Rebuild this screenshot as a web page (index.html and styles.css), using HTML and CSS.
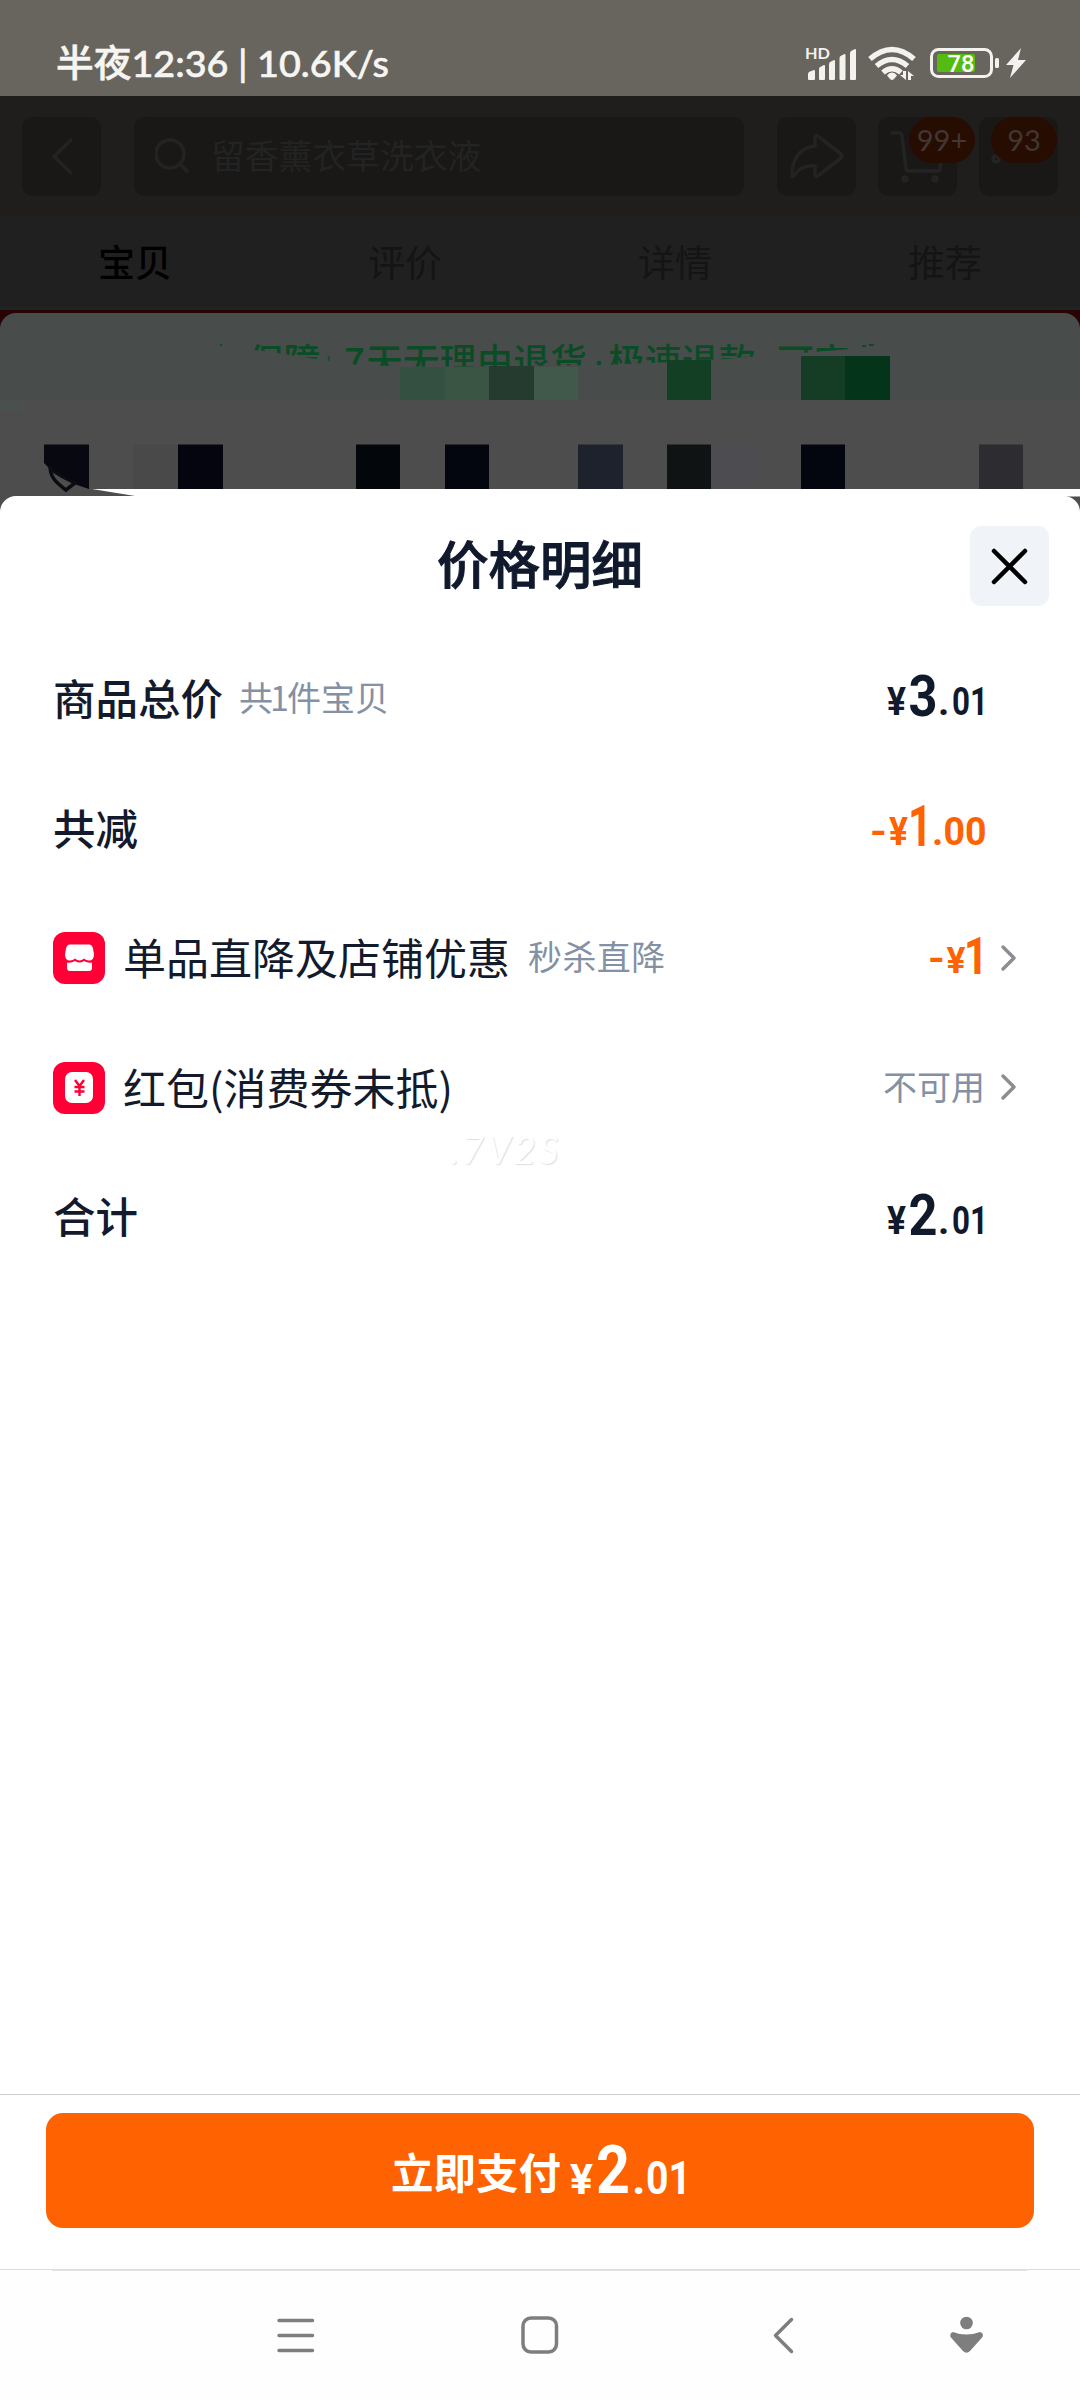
FILE: index.html
```html
<!DOCTYPE html>
<html lang="zh-CN">
<head>
<meta charset="utf-8">
<title>价格明细</title>
<link rel="stylesheet" href="styles.css">
</head>
<body>
<div class="screen">
  <div class="status">
    <svg class="status-clock" width="340" height="44" viewBox="0 0 340 44"><text x="0" y="35" textLength="333" lengthAdjust="spacingAndGlyphs">半夜12:36 | 10.6K/s</text></svg>
    <svg class="status-icons" width="230" height="40" viewBox="800 44 230 40">
      <text class="hd" x="805" y="59" textLength="25" lengthAdjust="spacingAndGlyphs">HD</text>
      <g fill="#f3f2ef">
        <path d="M808 79v-5q0-2 2-2.500l4-1.500q1 0 1 1v8q0 1-1 1h-5q-1 0-1-1z"/>
        <path d="M819 79v-10q0-2 2-2.500l3-1.500q1 0 1 1v13q0 1-1 1h-4q-1 0-1-1z"/>
        <path d="M829 79v-15q0-2 2-2.500l3-1.500q1 0 1 1v18q0 1-1 1h-4q-1 0-1-1z"/>
        <path d="M839.500 79v-21q0-2 2-2.500l3-1.500q1 0 1 1v24q0 1-1 1h-4q-1 0-1-1z"/>
        <path d="M850 79v-26q0-2 2-2.500l3-1.500q1 0 1 1v29q0 1-1 1h-4q-1 0-1-1z"/>
        <path d="M892 80q-1 0-2-1l-3-3.500q2-3 5-3t5 3l-3 3.500q-1 1-2 1z"/>
        <path d="M906 71v9l-6-5h3v-4zM908 80v-9l6 5h-3v4z"/>
        <rect x="995" y="58" width="4" height="10" rx="1.500"/>
        <path d="M1021 48l-15 17h7.500l-3.500 13 16-18h-8z"/>
      </g>
      <g fill="none" stroke="#f3f2ef" stroke-width="5.500">
        <path d="M870 59q22-19 44 0"/><path d="M876.500 66q15.500-13 31 0"/><path d="M883 72.500q9-7.500 18 0"/>
      </g>
      <rect x="931.500" y="49.500" width="60" height="27" rx="7" fill="none" stroke="#f3f2ef" stroke-width="3"/>
      <rect x="937" y="54" width="38" height="18" rx="2" fill="#56bb10"/>
      <text class="battery" x="947.500" y="72" textLength="27" lengthAdjust="spacingAndGlyphs">78</text>
    </svg>
  </div>

  <div class="header">
    <div class="tool back"><svg width="79" height="79" viewBox="0 0 79 79"><path d="M49 23L32 39.500 49 56"/></svg></div>
    <div class="search">
      <svg width="36" height="40" viewBox="0 0 36 40"><circle cx="15" cy="19" r="14"/><path d="M26 30l6 6"/></svg>
      <span>留香薰衣草洗衣液</span>
    </div>
    <div class="tool share"><svg width="79" height="79" viewBox="0 0 79 79"><path d="M15 59c0-18 9-29 23-30V21q1-4 4-1L64 37q2 2 0 4L42 58q-3 3-4-1V49c-10-1-16 2-21 10q-1 1-2 0z"/></svg></div>
    <div class="tool cart"><svg width="79" height="79" viewBox="0 0 79 79"><path d="M14 16h7q3 0 3 3l4 32q0 3 3 3h28q3 0 3-3l4-25"/><circle cx="27" cy="62" r="2"/><circle cx="57" cy="62" r="2"/></svg><b class="badge">99+</b></div>
    <div class="tool more"><svg width="79" height="79" viewBox="0 0 79 79"><circle cx="17" cy="42" r="3"/></svg><b class="badge">93</b></div>
  </div>
  <div class="tabs"><span class="active">宝贝</span><span>评价</span><span>详情</span><span>推荐</span></div>

  <div class="backdrop">
    <div class="service">
      <svg width="1080" height="87" viewBox="0 313 1080 87">
        <defs><clipPath id="cut"><path d="M200 340H880V346L850 349L815 352L760 356L700 361L600 365L480 366.500L400 366.500L345 364L310 358L270 352L215 345z"/></clipPath></defs>
        <g clip-path="url(#cut)" class="promise">
          <text x="247" y="375">保障</text>
          <text class="bar" x="326" y="371">|</text>
          <text x="344" y="375">7</text>
          <text x="366" y="375">天无理由退货</text>
          <text x="608" y="375">极速退款</text>
          <text x="777" y="375">可定</text>
        </g>
        <circle cx="221" cy="345" r="1.200" fill="#0a4c25"/>
        <path fill="#0a4c25" d="M862 345h4v2h-4zM869 344h5v2h-5z"/>
        <circle cx="599" cy="363" r="2.200" fill="#0a4c25"/>
        <path fill="#345040" d="M400 367h45v33h-45z"/><path fill="#3b5545" d="M445 367h44v33h-44z"/>
        <path fill="#263b2f" d="M489 366h45v34h-45z"/><path fill="#40594a" d="M534 367h44v33h-44z"/>
        <path fill="#133f25" d="M667 360h44v40h-44z"/><path fill="#153d25" d="M801 356h44v44h-44z"/><path fill="#04351a" d="M845 356h45v44h-45z"/>
      </svg>
    </div>
    <svg class="mosaic" width="1080" height="118" viewBox="0 400 1080 118">
      <path fill="#4a504e" d="M0 400h24v11H0z"/>
      <path fill="#080810" d="M44 444.500h45V489L77 485Q56 477 44 463z"/>
      <path d="M50 466c0 12 7 17 16 24l9-7Q62 477 52 470z" fill="#4d4d4d" stroke="#0b0b12" stroke-width="3.500"/>
      <path fill="#494949" d="M133 444.500h45V489h-45z"/><path fill="#05050f" d="M178 444.500h45V489h-45z"/>
      <path fill="#03060b" d="M356 444.500h44V489h-44z"/><path fill="#03060f" d="M445 444.500h44V489h-44zM801 444.500h44V489h-44z"/>
      <path fill="#1e222d" d="M578 444.500h45V489h-45z"/><path fill="#101314" d="M667 444.500h44V489h-44z"/>
      <path fill="#4d4c51" d="M711 444.500h45V489h-45z"/><path fill="#2d2c31" d="M979 444.500h44V489h-44z"/>
      <path fill="#fff" d="M92 489H1080V496.500H138z"/>
    </svg>
  </div>

  <section class="sheet">
    <div class="sheet-head">
      <h1>价格明细</h1>
      <div class="close"><svg width="79" height="80" viewBox="0 0 79 80"><path d="M24 25l31 31M55 25L24 56"/></svg></div>
    </div>
    <div class="rows">
      <div class="row"><span class="label strong">商品总价</span><span class="note">共<i>1</i>件宝贝</span>
        <svg class="price" width="122" height="60" viewBox="0 0 122 60"><text class="s" x="21" y="45" textLength="19" lengthAdjust="spacingAndGlyphs">¥</text><text class="b" x="42.500" y="45.500" textLength="29" lengthAdjust="spacingAndGlyphs">3</text><text class="s" x="72" y="45">.</text><text class="s" x="86" y="45" textLength="36" lengthAdjust="spacingAndGlyphs">01</text></svg></div>
      <div class="row"><span class="label strong">共减</span>
        <svg class="price minus" width="122" height="60" viewBox="0 0 122 60"><text class="s" x="4" y="46" textLength="17" lengthAdjust="spacingAndGlyphs">-</text><text class="s" x="23" y="45.500" textLength="19" lengthAdjust="spacingAndGlyphs">¥</text><text class="b" x="42" y="47" textLength="24" lengthAdjust="spacingAndGlyphs">1</text><text class="s" x="66" y="45.500">.</text><text class="s" x="77.500" y="45.500" textLength="43" lengthAdjust="spacingAndGlyphs">00</text></svg></div>
      <div class="row"><svg class="tile" width="52" height="52" viewBox="0 0 52 52"><rect width="52" height="52" rx="12"/><path fill="#fff" d="M17 12.500h19q3 0 4 4l1 6q0 6-5 6-3 0-5-2-2 2-4.500 2T22 26.500q-2 2-5 2-5 0-5-6l1-6q1-4 4-4zM14 30.500q4 1 8-1.500 4.500 3 9 0 4 2.500 8 1.500V36q0 3-3 3H17q-3 0-3-3z"/></svg><span class="label">单品直降及店铺优惠</span><span class="note wide">秒杀直降</span>
        <svg class="price minus" width="122" height="60" viewBox="0 0 122 60"><text class="s" x="62" y="43" textLength="17" lengthAdjust="spacingAndGlyphs">-</text><text class="s m" x="80.500" y="43.500" textLength="19" lengthAdjust="spacingAndGlyphs">¥</text><text class="b m" x="98" y="45" textLength="24" lengthAdjust="spacingAndGlyphs">1</text></svg>
        <svg class="chev" width="18" height="28" viewBox="0 0 18 28"><path d="M3 3l11 11L3 25"/></svg></div>
      <div class="row"><svg class="tile" width="52" height="52" viewBox="0 0 52 52"><rect width="52" height="52" rx="12"/><rect x="12" y="10" width="28" height="31" rx="7" fill="#fff"/><path d="M22 18l4.500 6 4.500-6M26.500 24v10M21.500 25h10M21.500 29.500h10" fill="none" stroke="#ff0036" stroke-width="2.400"/></svg><span class="label">红包(消费券未抵)</span>
        <span class="note value">不可用</span>
        <svg class="chev" width="18" height="28" viewBox="0 0 18 28"><path d="M3 3l11 11L3 25"/></svg></div>
      <div class="row"><span class="label strong">合计</span>
        <svg class="price" width="122" height="60" viewBox="0 0 122 60"><text class="s" x="21" y="46" textLength="19" lengthAdjust="spacingAndGlyphs">¥</text><text class="b" x="42.500" y="47" textLength="29" lengthAdjust="spacingAndGlyphs">2</text><text class="s" x="72" y="46">.</text><text class="s" x="86" y="46" textLength="36" lengthAdjust="spacingAndGlyphs">01</text></svg></div>
      <span class="mark">.7V2S</span>
    </div>
    <div class="pay">
      <div class="pay-button"><svg width="320" height="70" viewBox="385 2135 320 70"><text class="word" x="391" y="2189">立即支付</text><text class="s" x="570" y="2194" textLength="23" lengthAdjust="spacingAndGlyphs">¥</text><text class="b" x="596" y="2193" textLength="34" lengthAdjust="spacingAndGlyphs">2</text><text class="d" x="632" y="2194">.</text><text class="d" x="646" y="2194" textLength="45" lengthAdjust="spacingAndGlyphs">01</text></svg></div>
    </div>
  </section>

  <nav class="nav">
    <svg width="1080" height="129" viewBox="0 2270 1080 129">
      <path fill="#e2e2e2" d="M52 2270h975v1H52z"/>
      <g fill="none" stroke="#7e7e7e" stroke-width="3.500" stroke-linecap="round" stroke-linejoin="round">
        <path d="M279 2320.500h33.500M279 2335.500h33.500M279 2350.500h33.500"/>
        <rect x="523" y="2318" width="33.500" height="34" rx="8"/>
        <path d="M791.500 2319.500L775.500 2335.500 791.500 2351.500"/>
      </g>
      <circle cx="966.500" cy="2323" r="6.300" fill="#7e7e7e"/>
      <path fill="#7e7e7e" d="M953 2332q13 5 27 0 4 1 2.500 5L970 2351q-3.500 3.500-7 0L950.500 2337q-1-4 2.500-5z"/>
    </svg>
  </nav>
</div>
</body>
</html>
```
FILE: styles.css
```css
* { box-sizing: border-box; }
body { margin: 0; font-family: "Noto Sans CJK SC", sans-serif; background: #fff; }
svg { display: block; flex: none; }
.screen { width: 1080px; height: 2400px; display: flex; flex-direction: column; overflow: hidden; }

.status { height: 96px; flex: none; background: #68645e; display: flex; justify-content: space-between; align-items: flex-start; padding: 42px 50px 0 56px; }
.status-clock text { font: 500 37px Lato, "Noto Sans CJK SC", sans-serif; fill: #f6f5f2; stroke: #f6f5f2; stroke-width: .6px; }
.status-icons { margin-top: 2px; }
.hd { font: 700 15.500px Lato, sans-serif; fill: #f3f2ef; }
.battery { font: 500 23.500px Roboto, sans-serif; fill: #fff; }

.header { height: 119px; flex: none; background: #1f1e1c; display: flex; padding: 21px 22px 0; border-bottom: 10px solid #211d1a; }
.tool, .search { height: 79px; border-radius: 11px; background: #191816; }
.tool { width: 79px; position: relative; }
.header svg { fill: none; stroke: #232323; stroke-width: 3.500; stroke-linecap: round; stroke-linejoin: round; }
.search { width: 610px; margin: 0 33px; padding: 0 0 4px 21px; display: flex; align-items: center; gap: 20px; color: #232323; font-size: 33.800px; }
.cart { margin-left: 22px; }
.more { margin-left: 22px; }
.badge { position: absolute; top: 0; left: 31px; width: 66px; height: 46px; border-radius: 23px; background: #270c02; color: #403733; font: 400 29px/46px Lato, sans-serif; text-align: center; }
.more .badge { left: 12px; }

.tabs { height: 92px; flex: none; background: #202020; display: grid; grid-template-columns: repeat(4, 1fr); text-align: center; font-size: 37px; line-height: 93px; color: #141414; }
.tabs .active { color: #000; font-weight: 500; }

.backdrop { height: 211px; flex: none; background: #4d4d4d; }
.service { height: 93px; background: #270303; border-top: 3px solid #1d2422; padding-top: 3px; }
.service svg { background: #484d4b; border-radius: 16px 16px 0 0; }
.promise text { font-size: 36.800px; font-weight: 500; fill: #0a4c25; }
.promise .bar { font-size: 18px; }

.sheet { height: 1774px; flex: none; margin-top: -22px; background: #fff; border-radius: 16px 16px 0 0; display: flex; flex-direction: column; position: relative; }
.sheet-head { height: 139px; display: flex; justify-content: flex-end; padding: 30px 31px 0 0; position: relative; }
h1 { position: absolute; left: 0; right: 0; top: 28px; margin: 0; text-align: center; font-size: 51.500px; font-weight: 500; line-height: 76px; color: #11192c; -webkit-text-stroke: 1px #11192c; }
.close { width: 79px; height: 80px; border-radius: 11px; background: #f0f4f8; }
.close path { stroke: #000; stroke-width: 4.500; stroke-linecap: round; }

.rows { position: relative; flex: 1; }
.row { height: 129.500px; padding: 0 60px 0 53px; display: flex; align-items: center; color: #131a2b; }
.label { font-size: 43px; line-height: 60px; white-space: nowrap; margin-top: -5px; }
.strong { font-weight: 500; font-size: 42.500px; }
.tile { margin-right: 18px; margin-top: -1px; fill: #ff0036; }
.note { margin-left: 16px; font-size: 34px; line-height: 50px; color: #8490a3; margin-top: -5px; white-space: nowrap; }
.note i { font-style: normal; margin: 0 -2px 0 -3px; }
.wide { margin-left: 18px; letter-spacing: .4px; }
.note.value { margin-left: auto; margin-right: 1px; }
.price { margin-left: auto; margin-right: 32px; fill: #11192c; font-family: Roboto, sans-serif; font-weight: 700; }
.price .s { font-size: 39px; }
.price .b { font-size: 57px; }
.price .s.m { font-size: 37px; }
.price .b.m { font-size: 52px; }
.minus { fill: #ff6200; }
.chev { margin-left: 14px; margin-right: 2px; margin-top: -2px; fill: none; stroke: #8c8c93; stroke-width: 3.500; stroke-linecap: round; stroke-linejoin: round; }
.row:has(.chev) .price { margin-right: -2px; }
.mark { position: absolute; left: 450px; top: 488px; font: italic 400 38px/52px Lato, sans-serif; letter-spacing: 3px; color: #fff; text-shadow: 1px 1px 1px #dedede; }

.pay { height: 176px; border-top: 1px solid #ccc; border-bottom: 1px solid #ddd; padding: 18px 46px 0; }
.pay-button { height: 115px; border-radius: 17px; background: #ff6200; display: flex; padding: 22px 0 0 339px; fill: #fff; font-family: Roboto, sans-serif; font-weight: 700; }
.word { font: 700 42.500px "Noto Sans CJK SC", sans-serif; }
.pay .s { font-size: 43px; }
.pay .b { font-size: 66px; }
.pay .d { font-size: 47px; }
.nav { height: 129px; flex: none; background: #fefefe; }
```
